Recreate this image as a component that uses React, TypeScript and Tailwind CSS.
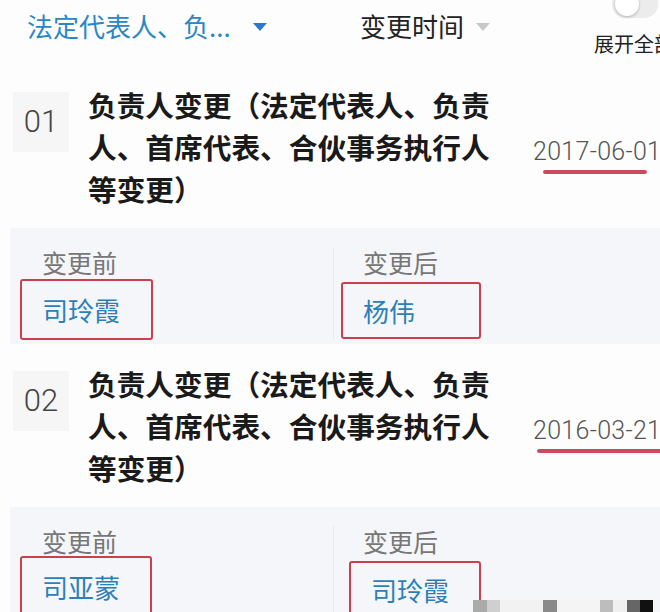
const records = [
  {
    no: "01",
    date: "2017-06-01",
    before: "司玲霞",
    after: "杨伟",
    lineClass: "ml-[10px] w-[104px]",
    beforeBox: "mt-[2px] h-[61px] w-[133px] ml-[10px]",
    afterBox: "mt-[5px] h-[57px] w-[140px] ml-[7px]",
  },
  {
    no: "02",
    date: "2016-03-21",
    before: "司亚蒙",
    after: "司玲霞",
    lineClass: "ml-[4px] w-[130px]",
    beforeBox: "mt-[0px] h-[61px] w-[132px] ml-[10px]",
    afterBox: "mt-[5px] h-[57px] w-[132px] ml-[15px]",
  },
];

const titleLines = ["负责人变更（法定代表人、负责", "人、首席代表、合伙事务执行人", "等变更）"];

const App = () => {
  return (
    <div className="relative h-[612px] w-[660px] overflow-hidden bg-[#fdfdfd] font-['Noto_Sans_CJK_SC',sans-serif]">
      {/* filter bar */}
      <div className="flex h-[84px] items-start">
        <div className="flex w-[360px] shrink-0 items-center pl-[27px] pt-[11px]">
          <span className="text-[26px] leading-[30px] text-[#2a87c4]">法定代表人、负...</span>
          <span className="ml-[22px] mt-[2px] h-0 w-0 border-x-[7px] border-t-[8px] border-x-transparent border-t-[#2a78d0]" />
        </div>
        <div className="flex w-[234px] shrink-0 items-center pt-[11px]">
          <span className="text-[26px] leading-[30px] text-[#222]">变更时间</span>
          <span className="ml-[12px] mt-[2px] h-0 w-0 border-x-[7px] border-t-[8px] border-x-transparent border-t-[#c8c8c8]" />
        </div>
        <div className="flex shrink-0 flex-col">
          <div className="ml-[18px] mt-[-10px] h-[28px] w-[46px] rounded-full bg-[#ececec]">
            <div className="ml-[3px] mt-[2px] h-[24px] w-[24px] rounded-full bg-white shadow-[0_1px_3px_rgba(0,0,0,0.25)]" />
          </div>
          <span className="mt-[14px] whitespace-nowrap text-[20px] leading-[24px] text-[#222]">展开全部</span>
        </div>
      </div>

      {records.map((r) => (
        <div key={r.no} className="mb-[19px]">
          <div className="flex pl-[13px]">
            <div className="mt-[8px] flex h-[60px] w-[56px] shrink-0 items-center justify-center bg-[#f6f6f6] font-['Roboto',sans-serif] text-[31px] font-light text-[#444]">
              {r.no}
            </div>
            <div className="ml-[19px] w-[410px] shrink-0 text-[28.7px] font-bold leading-[42px] text-[#1a1a1a]">
              {titleLines.map((l) => (
                <div key={l} className="whitespace-nowrap">{l}</div>
              ))}
            </div>
            <div className="ml-[35px] shrink-0 pt-[53px]">
              <div className="whitespace-nowrap font-['Roboto',sans-serif] text-[25px] font-light leading-[30px] tracking-[0.3px] text-[#555]">
                {r.date}
              </div>
              <div className={`mt-[3px] h-[4px] rounded-full bg-[#cc4a5e] ${r.lineClass}`} />
            </div>
          </div>

          <div className="ml-[10px] mt-[18px] flex bg-[#f4f6f9] pb-[4px] pt-[19px]">
            <div className="w-[323px] shrink-0">
              <div className="ml-[32px] text-[25px] leading-[30px] text-[#777]">变更前</div>
              <div className={`flex items-center rounded-[3px] border-2 border-[#c9404f] pl-[20px] ${r.beforeBox}`}>
                <span className="text-[26px] leading-[30px] text-[#2c7fb8]">{r.before}</span>
              </div>
            </div>
            <div className="flex-1 border-l border-[#e6e9ed]">
              <div className="ml-[29px] text-[25px] leading-[30px] text-[#777]">变更后</div>
              <div className={`flex items-center rounded-[3px] border-2 border-[#c9404f] pl-[20px] ${r.afterBox}`}>
                <span className="text-[26px] leading-[30px] text-[#2c7fb8]">{r.after}</span>
              </div>
            </div>
          </div>
        </div>
      ))}

      {/* mosaic watermark in the corner */}
      <div className="absolute bottom-0 left-[473px] flex h-[12px]">
        <div className="w-[14px] bg-[#aaaaaa]" />
        <div className="w-[13px] bg-[#cfcfcf]" />
        <div className="w-[43px] bg-[#f2f2f2]" />
        <div className="w-[14px] bg-[#8a8a8a]" />
        <div className="w-[43px] bg-[#f4f4f4]" />
        <div className="w-[13px] bg-[#bdbdbd]" />
        <div className="w-[14px] bg-[#f0f0f0]" />
        <div className="w-[13px] bg-[#666]" />
        <div className="w-[13px] bg-[#111]" />
      </div>
    </div>
  );
};

export default App;
